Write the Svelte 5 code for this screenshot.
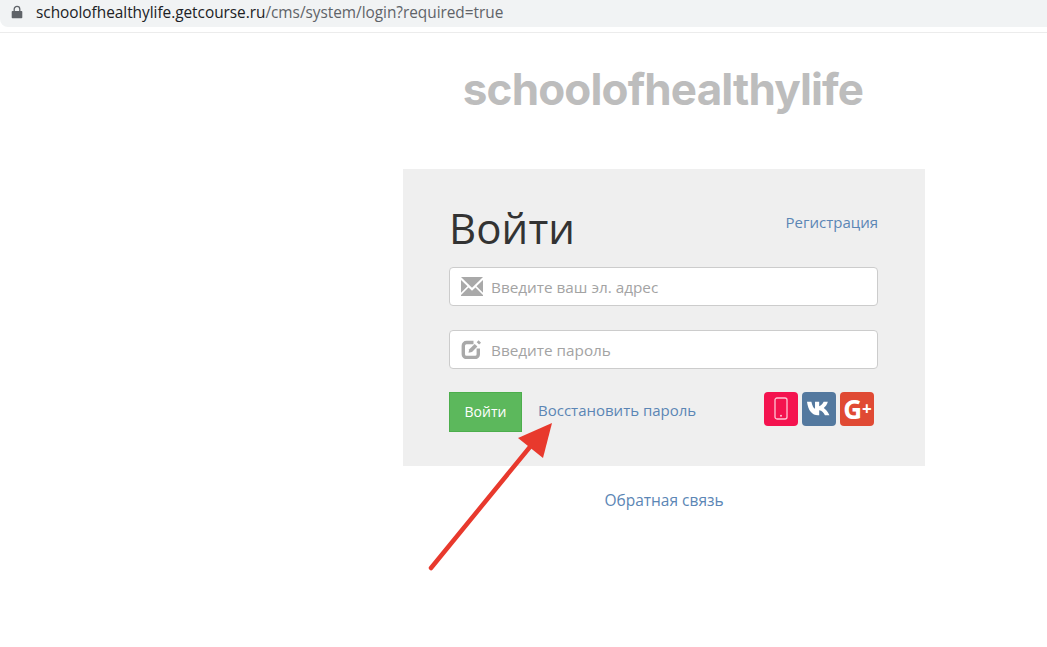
<script>
  const arrow = { x1: 431, y1: 568, x2: 541, y2: 433 };
</script>

<div class="page">
  <header class="urlbar">
    <svg class="lock" width="12" height="14" viewBox="0 0 12 14" aria-hidden="true">
      <path d="M1.5 6h9a.8.8 0 0 1 .8.8v5.6a.8.8 0 0 1-.8.8h-9a.8.8 0 0 1-.8-.8V6.800a.8.8 0 0 1 .8-.8z" fill="#5f6368"/>
      <path d="M3.200 6V4.200a2.800 2.800 0 0 1 5.600 0V6" fill="none" stroke="#5f6368" stroke-width="1.300"/>
    </svg>
    <span class="url"><span class="host">schoolofhealthylife.getcourse.ru</span>/cms/system/login?required=true</span>
  </header>
  <div class="rule"></div>

  <main class="column">
    <h2 class="brand">schoolofhealthylife</h2>

    <section class="card">
      <div class="head">
        <h1>Войти</h1>
        <a href="#r" class="link reg">Регистрация</a>
      </div>

      <div class="field first">
        <svg class="ico" width="22" height="19" viewBox="0 0 22 18" preserveAspectRatio="none" aria-hidden="true">
          <path d="M0 0h22L11 10.200z" fill="#a9a9a9"/>
          <path d="M0 2.800V15l6.500-6.300zM22 2.800V15l-6.500-6.300z" fill="#a9a9a9"/>
          <path d="M0 18h22v-1L14.500 10 11 13 7.500 10 0 17z" fill="#a9a9a9"/>
        </svg>
        <span class="ph">Введите ваш эл. адрес</span>
      </div>

      <div class="field">
        <svg class="ico" width="22" height="20" viewBox="0 0 22 20" aria-hidden="true">
          <path d="M12.500 3.500H5.500a3.200 3.200 0 0 0-3.200 3.200v8.600a3.200 3.200 0 0 0 3.200 3.200h8.600a3.200 3.200 0 0 0 3.200-3.200V9.500" fill="none" stroke="#a9a9a9" stroke-width="3.400"/>
          <path d="M7.500 13.800l.8-3.500 5.400-5.400 2.700 2.700-5.400 5.400z" fill="#a9a9a9"/>
          <path d="M17.600 1.300l2.400 2.400-1.900 1.900-2.400-2.400z" fill="#a9a9a9"/>
        </svg>
        <span class="ph">Введите пароль</span>
      </div>

      <div class="actions">
        <button class="submit">Войти</button>
        <a href="#p" class="link restore">Восстановить пароль</a>
        <div class="socials">
          <span class="soc phone">
            <svg width="14" height="23" viewBox="0 0 14 23" aria-hidden="true">
              <rect x="1" y="1" width="12" height="21" rx="2" fill="none" stroke="#ffc4d4" stroke-width="1.300"/>
              <circle cx="7" cy="18.800" r="1" fill="#ffc4d4"/>
            </svg>
          </span>
          <span class="soc vk">
            <svg width="25" height="15" viewBox="0 0 24 14" aria-hidden="true">
              <path d="M0 .5h4.200c.8 3.600 2 6 3.500 6.800V.5h4v4.300C13.600 4.300 15 2.500 16 .5h4c-.7 2.600-2.300 4.700-3.900 6 1.900 1.200 3.900 3.400 5.400 7h-4.300c-1-2.500-2.800-4.400-5.500-4.800v4.800h-1.200C5 13.500 1 9 0 .5z" fill="#fff"/>
            </svg>
          </span>
          <span class="soc gp">G<em>+</em></span>
        </div>
      </div>
    </section>

    <a href="#f" class="link feedback">Обратная связь</a>
  </main>

  <svg class="arrow" width="1047" height="647" viewBox="0 0 1047 647" aria-hidden="true">
    <line x1={arrow.x1} y1={arrow.y1} x2="534" y2="442" stroke="#e8392d" stroke-width="4.500" stroke-linecap="round"/>
    <path d="M552 423L518 438 543 458z" fill="#e8392d"/>
  </svg>
</div>

<style>
  :global(body) {
    margin: 0;
    background: #fff;
  }
  .page {
    position: relative;
    width: 1047px;
    height: 647px;
    overflow: hidden;
    font-family: "Open Sans", "Noto Sans", sans-serif;
  }
  .urlbar {
    height: 27px;
    background: #f1f3f4;
    border-bottom-left-radius: 8px;
    display: flex;
    align-items: center;
    padding-left: 11px;
    box-sizing: border-box;
    gap: 13px;
  }
  .lock { margin-top: -3px; }
  .url {
    font-family: "Open Sans", "Noto Sans", sans-serif;
    font-size: 15.400px;
    letter-spacing: -.03px;
    color: #5f6368;
    margin-top: -3px;
    white-space: nowrap;
  }
  .host { color: #202124; }
  .rule {
    height: 1px;
    margin-top: 5px;
    margin-bottom: .5px;
    background: #ececec;
  }
  .column {
    width: 522px;
    margin-left: 403px;
    display: flex;
    flex-direction: column;
  }
  .brand {
    margin: 27px 0 3px;
    height: 57px;
    line-height: 57px;
    text-align: center;
    font-family: "Inter", "Open Sans", sans-serif;
    font-size: 44px;
    font-weight: 700;
    color: #bdbdbd;
    letter-spacing: -.85px;
    white-space: nowrap;
    padding-right: 2px;
  }
  .card {
    margin-top: 48px;
    height: 297px;
    background: #efefef;
    padding: 0 47px 0 46px;
    box-sizing: border-box;
  }
  .head {
    display: flex;
    justify-content: space-between;
    align-items: flex-start;
    padding-top: 30px;
    height: 98px;
    box-sizing: border-box;
  }
  h1 {
    margin: 0;
    font-weight: 400;
    font-size: 42px;
    line-height: 58px;
    color: #333;
    letter-spacing: .1px;
  }
  .link {
    color: #5b86b5;
    text-decoration: none;
    font-size: 15px;
  }
  .reg { margin-top: 13px; margin-right: 0; }
  .field {
    height: 39px;
    background: #fff;
    border: 1px solid #cccccc;
    border-radius: 4px;
    box-sizing: border-box;
    display: flex;
    align-items: center;
    padding-left: 11px;
    gap: 8px;
    margin-top: 24px;
  }
  .field.first { margin-top: 0; }
  .ph {
    color: #a3a3a3;
    font-size: 15.300px;
    padding-top: 2px;
  }
  .actions {
    display: flex;
    align-items: flex-start;
    margin-top: 23px;
  }
  .submit {
    width: 73px;
    height: 40px;
    background: #5cb85c;
    border: 1px solid #4cae4c;
    color: #fff;
    font: 500 14px "Open Sans", "Noto Sans", sans-serif;
    padding: 0;
  }
  .restore {
    margin: 8px 0 0 16px;
    white-space: nowrap;
  }
  .socials {
    display: flex;
    gap: 4px;
    margin-left: auto;
    margin-right: 4px;
  }
  .soc {
    width: 34px;
    height: 34px;
    border-radius: 4px;
    display: flex;
    align-items: center;
    justify-content: center;
    color: #fff;
  }
  .phone { background: #f4134f; }
  .vk { background: #54799f; }
  .gp {
    background: #e04a34;
    font: 700 26px "Open Sans", sans-serif;
    letter-spacing: -1px;
  }
  .gp em {
    font-style: normal;
    font-size: 17px;
    margin-left: 1px;
  }
  .feedback {
    align-self: center;
    margin-top: 23px;
    font-size: 15.500px;
  }
  .arrow {
    position: absolute;
    left: 0;
    top: 0;
    pointer-events: none;
  }
</style>
